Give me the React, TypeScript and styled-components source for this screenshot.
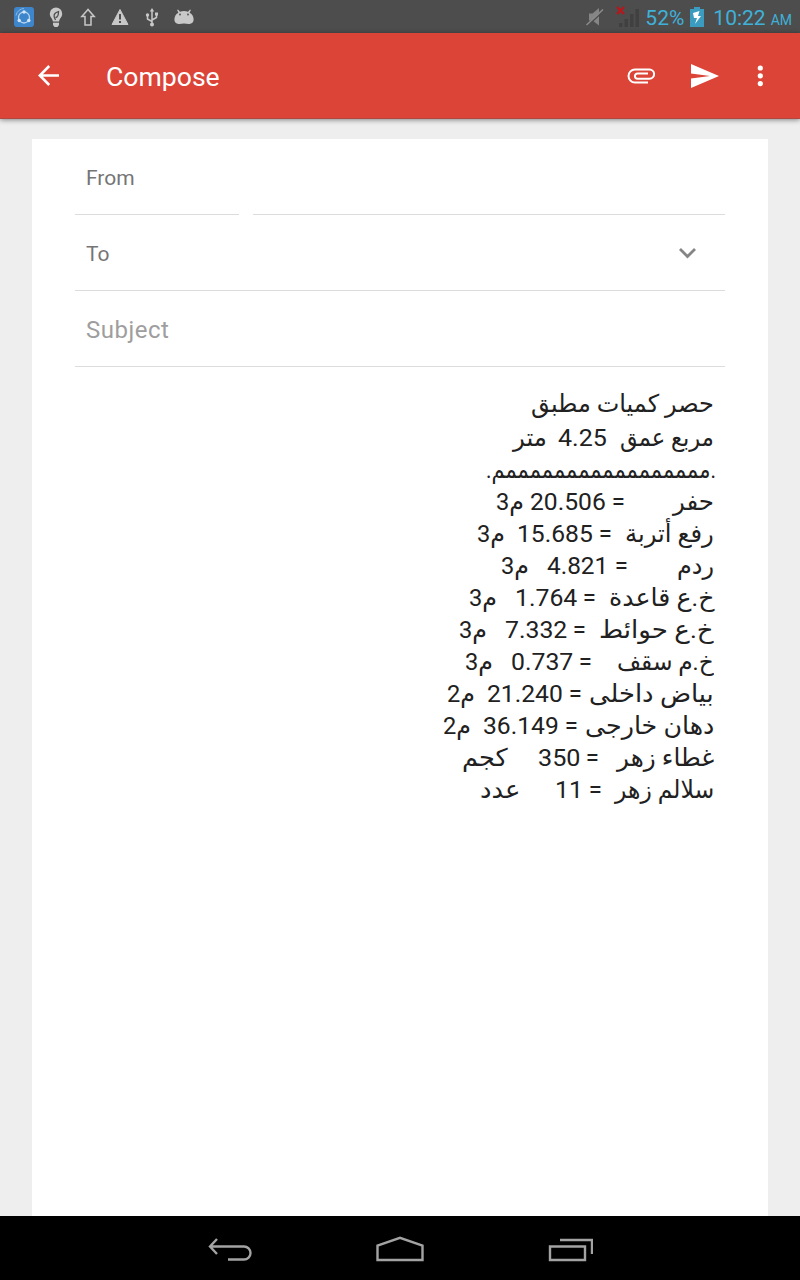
import React, { useLayoutEffect, useRef, useState } from 'react';
import styled, { createGlobalStyle } from 'styled-components';

const GlobalStyle = createGlobalStyle`
  * { box-sizing: border-box; }
  body { margin: 0; background: #eee; font-family: Roboto, "Open Sans", sans-serif; }
`;

const Screen = styled.div`
  display: flex;
  flex-direction: column;
  width: 800px;
  height: 1280px;
  overflow: hidden;
  background: #eee;
`;

const StatusBar = styled.div`
  display: flex;
  align-items: center;
  flex: 0 0 33px;
  padding: 0 8px 0 12px;
  background: #4d4d4d;
  color: #3fb1d8;
`;

const StatusIcons = styled.div`
  display: flex;
  gap: 8px;
`;

const StatusRight = styled.div`
  display: flex;
  align-items: center;
  margin-left: auto;
`;

const Gap = styled.span<{ $w: number }>`
  flex: 0 0 ${(p) => p.$w}px;
`;

const Percent = styled.span`
  margin-top: 2px;
  font-size: 21px;
`;

const Clock = styled.span`
  margin-top: 2px;
  font-size: 21px;
`;

const Meridiem = styled.span`
  margin: 6px 0 0 5px;
  font-size: 14px;
`;

const AppBar = styled.header`
  display: flex;
  align-items: center;
  flex: 0 0 86px;
  padding: 0 37px 0 36px;
  background: #db4437;
  border-bottom: 1px solid #b0493f;
  box-shadow: 0 1px 5px rgba(0, 0, 0, 0.45);
  color: #fff;
`;

const Title = styled.h1`
  flex: 1;
  margin: 3px 0 0 45px;
  font-size: 26.6px;
  font-weight: 400;
  line-height: 32px;
`;

const Sheet = styled.main`
  flex: 1;
  margin: 20px 32px 0;
  padding: 0 43px;
  background: #fff;
`;

const FieldRow = styled.div`
  display: flex;
  gap: 14px;
  height: 76px;
`;

const Field = styled.div<{ $width?: number; $hint?: boolean }>`
  display: flex;
  flex: ${(p) => (p.$width ? `0 0 ${p.$width}px` : '1')};
  align-items: center;
  justify-content: space-between;
  padding: 2px 26px 0 11px;
  border-bottom: 1px solid #dcdcdc;
  color: ${(p) => (p.$hint ? '#9e9e9e' : '#757575')};
  font-size: ${(p) => (p.$hint ? 24 : 21)}px;
  letter-spacing: ${(p) => (p.$hint ? 0.5 : 0)}px;
`;

const Body = styled.section`
  direction: rtl;
  padding: 21px 11px 0 0;
  color: #212121;
`;

const Line = styled.div<{ $tall?: boolean }>`
  display: flex;
  height: ${(p) => (p.$tall ? 34 : 32)}px;
  line-height: 32px;
`;

const Run = styled.span<{ $before: number; $width: number; $latin: boolean }>`
  flex: 0 0 ${(p) => p.$width}px;
  min-width: 0;
  margin-inline-start: ${(p) => p.$before}px;
  height: 32px;
  font-family: Roboto, "DejaVu Sans", sans-serif;
  font-size: ${(p) => (p.$latin ? 24 : 24.5)}px;
  white-space: pre;
`;

const RunText = styled.span`
  display: inline-block;
  height: 32px;
  transform-origin: 100% 50%;
`;

const NavBar = styled.nav`
  display: flex;
  align-items: center;
  justify-content: center;
  gap: 122px;
  flex: 0 0 64px;
  background: #000;
`;

type Part = [text: string, right: number, left: number];

const RIGHT = 714;

const lines: Part[][] = [
  [['حصر كميات مطبق', 714, 531]],
  [['مربع عمق', 714, 620], ['4.25', 607, 558], ['متر', 547, 513]],
  [['.مممممممممممممممممم.', 716, 486]],
  [['حفر', 714, 673], ['=', 625, 612], ['20.506', 606, 530], ['م3', 524, 496]],
  [['رفع أتربة', 714, 625], ['=', 612, 599], ['15.685', 593, 517], ['م3', 505, 477]],
  [['ردم', 714, 677], ['=', 628, 615], ['4.821', 608, 547], ['م3', 529, 501]],
  [['خ.ع قاعدة', 714, 609], ['=', 596, 583], ['1.764', 577, 515], ['م3', 497, 469]],
  [['خ.ع حوائط', 714, 599], ['=', 586, 573], ['7.332', 567, 505], ['م3', 487, 459]],
  [['خ.م سقف', 714, 617], ['=', 592, 579], ['0.737', 573, 511], ['م3', 493, 465]],
  [['بياض داخلى', 714, 589], ['=', 582, 569], ['21.240', 563, 487], ['م2', 475, 447]],
  [['دهان خارجى', 714, 585], ['=', 578, 565], ['36.149', 559, 483], ['م2', 471, 443]],
  [['غطاء زهر', 714, 617], ['=', 599, 586], ['350', 580, 538], ['كجم', 508, 462]],
  [['سلالم زهر', 714, 615], ['=', 602, 589], ['11', 583, 555], ['عدد', 520, 480]],
];

function FittedRun({ text, before, width }: { text: string; before: number; width: number }) {
  const ref = useRef<HTMLSpanElement>(null);
  const [scale, setScale] = useState(1);
  useLayoutEffect(() => {
    if (ref.current) setScale(width / ref.current.offsetWidth);
  }, [width, text]);
  return (
    <Run $before={before} $width={width} $latin={/^[\d.=]+$/.test(text)}>
      <RunText ref={ref} style={{ transform: `scaleX(${scale})` }}>{text}</RunText>
    </Run>
  );
}

const grey = '#c8c8c8';

function MuteIcon() {
  return (
    <svg width="20" height="20" viewBox="0 0 20 20">
      <path d="M4 6.500h3.500L14 1v17.500L7.500 13.500H4z" fill="#858585" />
      <path d="M3 18.500L19 3.500" stroke="#4d4d4d" strokeWidth="1.500" />
      <path d="M1.500 18L18 2.500" stroke="#8a8a8a" strokeWidth="1.600" />
    </svg>
  );
}

function SignalIcon() {
  return (
    <svg width="24" height="22" viewBox="0 0 24 22">
      <path d="M3 17h3.500v4H3zM8.500 13H12v8H8.500zM14 8h3.500v13H14zM19.500 3H23v18h-3.500z" fill="#404040" />
      <path d="M1 1l7 7M8 1L1 8" stroke="#b8161b" strokeWidth="2.400" />
    </svg>
  );
}

function BatteryIcon() {
  return (
    <svg width="14" height="22" viewBox="0 0 14 22">
      <path d="M4 1h6v2h4v18H0V3h4z" fill="#3b9cbf" />
      <path d="M9.500 5L3 7l1 5h3l-2 6 6-8H8z" fill="#fff" />
    </svg>
  );
}

export default function App() {
  return (
    <Screen>
      <GlobalStyle />
      <StatusBar>
        <StatusIcons>
          <svg width="24" height="24" viewBox="0 0 24 24" fill="none">
            <rect x="2" y="2" width="20" height="20" rx="3" fill="#3e86cc" />
            <circle cx="12" cy="12.500" r="5.500" stroke="#b5d3ee" strokeWidth="1.300" />
            <circle cx="12" cy="7" r="1.700" fill="#d4e5f5" />
            <circle cx="7.200" cy="15.500" r="1.700" fill="#d4e5f5" />
            <circle cx="16.800" cy="15.500" r="1.700" fill="#d4e5f5" />
            <path d="M4 10.500a8.500 8.500 0 0 1 8-7" stroke="#8cb9e2" />
          </svg>
          <svg width="24" height="24" viewBox="0 0 24 24">
            <path d="M12 2.500a6.200 6.200 0 0 0-6.200 6.200c0 3.400 2.800 4.700 3.100 7.800h6.200c.3-3.100 3.100-4.400 3.100-7.800A6.200 6.200 0 0 0 12 2.500z" fill={grey} />
            <path d="M11.500 15c-2.500-4-2-7 3-8.500 0 3.500-.5 6-3 6" stroke="#4d4d4d" strokeWidth="1.300" fill="none" />
            <path d="M9 17h6v3l-1.500 2h-3L9 20z" fill={grey} />
            <path d="M8.500 17.500h7" stroke="#4d4d4d" strokeWidth=".7" />
          </svg>
          <svg width="24" height="24" viewBox="0 0 24 24" fill="none" stroke={grey} strokeWidth="1.500">
            <path d="M12 4.500L5.800 11.500H9V20h6v-8.500h3.200z" />
          </svg>
          <svg width="24" height="24" viewBox="0 0 24 24">
            <path d="M12 4.500L4 19.500h16z" fill={grey} stroke={grey} strokeLinejoin="round" />
            <path d="M12 9v5.500M12 16v2" stroke="#4d4d4d" strokeWidth="2" />
          </svg>
          <svg width="24" height="24" viewBox="0 0 24 24" fill="none" stroke={grey} strokeWidth="1.500">
            <path d="M12 5v15M12 16.500L7.500 14v-3M12 15l4.500-2.500V9" />
            <path d="M12 3l2.200 3.500H9.800z" fill={grey} stroke="none" />
            <circle cx="12" cy="19.500" r="2" fill={grey} stroke="none" />
            <circle cx="7.500" cy="10" r="1.700" fill={grey} stroke="none" />
            <path d="M15 7.500h3v3h-3z" fill={grey} stroke="none" />
          </svg>
          <svg width="24" height="24" viewBox="0 0 24 24">
            <path d="M6 4.500L8 6.700c2.400-.9 5.600-.9 8 0l2-2.200.9.600-1.300 2.600c3 1.500 4 4.300 4 6.800 0 3.500-2.700 4.500-5 4.500-1.500 0-2.900-.5-4.600-.5s-3.100.5-4.600.5c-2.300 0-5-1-5-4.500 0-2.500 1-5.300 4-6.800L5.100 5.100z" fill={grey} />
            <circle cx="8" cy="9.500" r=".9" fill="#4d4d4d" />
            <circle cx="16" cy="9.500" r=".9" fill="#4d4d4d" />
          </svg>
        </StatusIcons>
        <StatusRight>
          <MuteIcon />
          <Gap $w={11} />
          <SignalIcon />
          <Gap $w={5} />
          <Percent>52%</Percent>
          <Gap $w={6} />
          <BatteryIcon />
          <Gap $w={9} />
          <Clock>10:22</Clock>
          <Meridiem>AM</Meridiem>
        </StatusRight>
      </StatusBar>
      <AppBar>
        <svg width="25" height="24" viewBox="0 0 25 24" fill="none" stroke="#fff" strokeWidth="2.500">
          <path d="M23 11.500H4M13.200 2L3.800 11.500l9.400 9.500" />
        </svg>
        <Title>Compose</Title>
        <svg width="28" height="16" viewBox="0 0 28 16" fill="none" stroke="#fff" strokeWidth="2">
          <path d="M21 14.500H8A6.500 6.500 0 0 1 8 1.500h14.500a4.600 4.600 0 0 1 0 9.200H10.500a2.600 2.600 0 0 1 0-5.200H21" />
        </svg>
        <Gap $w={36} />
        <svg width="28" height="24" viewBox="0 0 28 24" fill="#fff">
          <path d="M0 0l28 12L0 24v-9.500L19 12 0 9.500z" />
        </svg>
        <Gap $w={38} />
        <svg width="6" height="22" viewBox="0 0 6 22" fill="#fff">
          <circle cx="3.300" cy="3" r="2.600" />
          <circle cx="3.300" cy="10.800" r="2.600" />
          <circle cx="3.300" cy="18.600" r="2.600" />
        </svg>
      </AppBar>
      <Sheet>
        <FieldRow>
          <Field $width={164}>From</Field>
          <Field />
        </FieldRow>
        <FieldRow>
          <Field>
            To
            <svg width="23" height="14" viewBox="0 0 23 14" fill="none" stroke="#858585" strokeWidth="2.800">
              <path d="M4 2l7.500 7.500L19 2" />
            </svg>
          </Field>
        </FieldRow>
        <FieldRow>
          <Field $hint>Subject</Field>
        </FieldRow>
        <Body>
          {lines.map((parts, i) => (
            <Line key={i} $tall={i === 0}>
              {parts.map(([text, right, left], j) => (
                <FittedRun
                  key={j}
                  text={text}
                  before={(j ? parts[j - 1][2] : RIGHT) - right}
                  width={right - left}
                />
              ))}
            </Line>
          ))}
        </Body>
      </Sheet>
      <NavBar>
        <svg width="46" height="30" viewBox="0 0 46 30" fill="none" stroke="#a3a3a3" strokeWidth="2.400">
          <path d="M2.500 13.500H37a6.500 6.500 0 0 1 0 13H21M10 6l-7 7.500 7 7.500" />
        </svg>
        <svg width="50" height="30" viewBox="0 0 50 30" fill="none" stroke="#a3a3a3" strokeWidth="2.400">
          <path d="M2.500 27V12.500L25 4.800l22.500 7.700V27z" />
        </svg>
        <svg width="46" height="30" viewBox="0 0 46 30" fill="none" stroke="#a3a3a3" strokeWidth="2.400">
          <path d="M3 13.500h35V27H3zM13 7h32v14" />
        </svg>
      </NavBar>
    </Screen>
  );
}
